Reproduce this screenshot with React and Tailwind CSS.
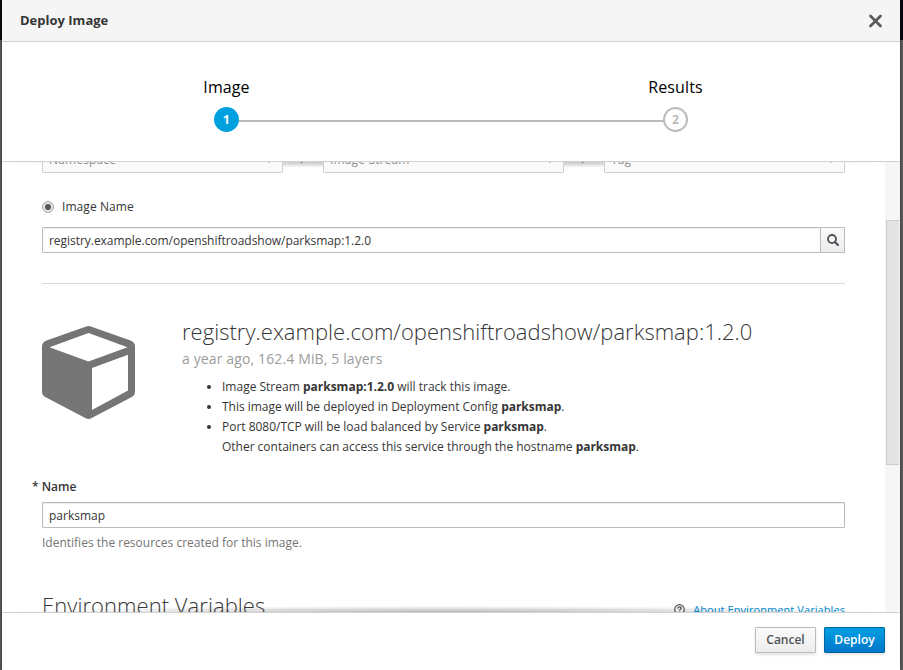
import React from "react";

function Caret() {
  return (
    <svg width="8" height="8" viewBox="0 0 8 8" className="mt-[2px]" fill="none" stroke="#8b8b8b" strokeWidth="1.3">
      <path d="M1 2 L4 5 L7 2" />
    </svg>
  );
}

function Select({ label }) {
  return (
    <div className="flex h-[26px] w-[241px] shrink-0 items-center justify-between rounded-[1px] border border-[#d1d1d1] bg-[#fafafa] pr-[9px] pl-1.5 text-[12px] leading-[20px] tracking-[0.15px] text-[#8b8d8f]">
      <span>{label}</span>
      <Caret />
    </div>
  );
}

function Slash() {
  return <div className="flex w-10 justify-center pt-[2px] text-[12px] leading-[20px] text-[#363636]">/</div>;
}

function Cube() {
  return (
    <svg width="93" height="93" viewBox="0 0 93 93" className="block shrink-0" fill="#757575" fillRule="evenodd">
      <path d="M44.2 0.4 Q46.5 -0.4 48.8 0.4 L88.5 14.4 Q93 16.2 93 20.5 V65.5 Q93 69 89.8 71 L49.2 92.3 Q46.5 93.6 43.8 92.3 L3.2 71 Q0 69 0 65.5 V20.5 Q0 16.2 4.5 14.4 Z M46.5 7 L7.5 21.3 L46.5 35.6 L85.5 21.3 Z M50 41.9 V84 L86 64.5 V28.7 Z" />
    </svg>
  );
}

function Step({ title, number, active }) {
  return (
    <div className="z-10 flex w-[61px] flex-col items-center">
      <div className="h-[24px] text-[16px] leading-[24px] tracking-[0.1px] text-black">{title}</div>
      <div
        className={
          active
            ? "mt-2 flex h-[25px] w-[25px] items-center justify-center rounded-full border-2 border-[#00a0df] bg-[#00a0df] text-[12px] font-bold text-white"
            : "mt-2 flex h-[25px] w-[25px] items-center justify-center rounded-full border-2 border-[#bbb] bg-white text-[12px] font-bold text-[#bbb]"
        }
      >
        {number}
      </div>
    </div>
  );
}

export default function App() {
  return (
    <div className="flex h-[670px] w-[903px] overflow-hidden bg-[linear-gradient(#08080e_0px,#08080e_40px,#5e5e60_40px)] pr-[3px] pl-[2px] font-['Open_Sans',sans-serif] text-[12px] leading-[20px] text-[#363636]">
      <div className="flex h-full w-[898px] flex-col bg-white shadow-[0_0_3px_rgba(0,0,0,0.6)]">
        <header className="flex h-[42px] shrink-0 items-center justify-between border-b border-[#d1d1d1] bg-[#f5f5f5] pr-[18px] pl-[18px]">
          <h1 className="-mt-[2px] text-[13px] leading-[20px] font-bold">Deploy Image</h1>
          <svg width="14" height="14" viewBox="0 0 14 14" stroke="#5a5a5a" strokeWidth="2.7" strokeLinecap="round" className="mt-px">
            <path d="M2.5 2 L12.5 12 M12.5 2 L2.5 12" />
          </svg>
        </header>

        <section className="flex h-[120px] shrink-0 border-b border-[#d1d1d1] pt-[33px] pl-[194px]">
          <div className="flex w-[510px] items-start">
            <Step title="Image" number="1" active />
            <div className="-mx-[19px] mt-[45px] h-[2px] flex-1 bg-[#bbb]" />
            <Step title="Results" number="2" />
          </div>
        </section>

        <main className="relative flex h-[450px] shrink-0 overflow-hidden">
          <div className="pointer-events-none absolute top-0 left-0 h-[6px] w-[883px] bg-[radial-gradient(farthest-side_at_50%_0,rgba(0,0,0,0.28),rgba(0,0,0,0))]" />
          <div className="pointer-events-none absolute bottom-0 left-0 h-[6px] w-[883px] bg-[radial-gradient(farthest-side_at_50%_100%,rgba(0,0,0,0.28),rgba(0,0,0,0))]" />
          <div className="relative -mt-[15px] w-[883px] pr-10 pl-10">
            <div className="flex">
              <Select label="Namespace" />
              <Slash />
              <Select label="Image Stream" />
              <Slash />
              <Select label="Tag" />
            </div>

            <div className="mt-[24px] flex h-5 items-center">
              <span className="flex h-3 w-3 items-center justify-center rounded-full border border-[#aaa] bg-[#e4e4e4]">
                <span className="h-1.5 w-1.5 rounded-full bg-[#555]" />
              </span>
              <span className="ml-2 tracking-[0.08px]">Image Name</span>
            </div>

            <div className="mt-[10px] flex h-[26px]">
              <div className="flex flex-1 items-center rounded-l-[1px] border border-[#bbb] pt-px pl-1.5 tracking-[-0.04px] shadow-[inset_0_1px_1px_rgba(3,3,3,0.075)]">
                registry.example.com/openshiftroadshow/parksmap:1.2.0
              </div>
              <div className="flex w-[24px] items-center justify-center rounded-r-[1px] border border-l-0 border-[#bbb] bg-linear-to-b from-[#fafafa] to-[#ededed]">
                <svg width="12" height="12" viewBox="0 0 12 12" fill="none" stroke="#4d5258">
                  <circle cx="5" cy="5" r="4" strokeWidth="1.8" />
                  <path d="M8 8 L11 11" strokeWidth="2.2" strokeLinecap="round" />
                </svg>
              </div>
            </div>

            <div className="mt-[30px] h-px bg-[#d8d8d8]" />

            <div className="mt-[32px] flex h-[141px]">
              <div className="w-[140px] shrink-0 pt-[10px]">
                <Cube />
              </div>
              <div className="whitespace-nowrap">
                <h2 className="mt-[2px] text-[22px] leading-[26px] font-light tracking-[0.025px]">registry.example.com/openshiftroadshow/parksmap:1.2.0</h2>
                <p className="mt-[5px] text-[14px] leading-[20px] tracking-[0.13px] text-[#9c9c9c]">a year ago, 162.4 MiB, 5 layers</p>
                <ul className="mt-[8px] list-disc pl-10">
                  <li>Image Stream <b>parksmap:1.2.0</b> will track this image.</li>
                  <li className="tracking-[-0.03px]">This image will be deployed in Deployment Config <b>parksmap</b>.</li>
                  <li className="tracking-[-0.02px]">
                    Port 8080/TCP will be load balanced by Service <b>parksmap</b>.<br />
                    Other containers can access this service through the hostname <b>parksmap</b>.
                  </li>
                </ul>
              </div>
            </div>

            <div className="mt-[20px] -ml-[10px] h-5 font-semibold">* Name</div>
            <div className="mt-[5px] flex h-[26px] items-center rounded-[1px] border border-[#bbb] pt-px pl-1.5 shadow-[inset_0_1px_1px_rgba(3,3,3,0.075)]">
              parksmap
            </div>
            <p className="mt-[5px] text-[#757575]">Identifies the resources created for this image.</p>

            <div className="mt-[39px] flex h-[28px] items-start justify-between">
              <h2 className="text-[22px] leading-[26px] font-light tracking-[0.05px]">Environment Variables</h2>
              <div className="mt-[9px] flex items-center text-[11px] leading-[18px] text-[#0088ce]">
                <svg width="11" height="11" viewBox="0 0 11 11" fill="none" stroke="#4d5258" className="-mt-px mr-2">
                  <circle cx="5.5" cy="5.5" r="4.8" strokeWidth="1.2" />
                  <path d="M3.8 4.4 C3.8 2.4 7.2 2.4 7.2 4.2 C7.2 5.3 5.5 5.3 5.5 6.6 M5.5 7.4 V8.7" strokeWidth="1.4" />
                </svg>
                <span className="tracking-[0.08px]">About Environment Variables</span>
              </div>
            </div>
          </div>
          <div className="h-full w-[15px] bg-[#f6f6f6] pt-[58px] pr-px pl-px">
            <div className="h-[245px] border border-r-0 border-[#ccc] bg-[#e4e4e4]" />
          </div>
        </main>

        <footer className="flex flex-1 justify-end gap-2 border-t border-[#d1d1d1] pt-[14px] pr-[15px]">
          <button className="h-[26px] w-[61px] rounded-[1px] border border-[#bbb] bg-linear-to-b from-[#fafafa] to-[#ededed] text-[12px] leading-[24px] font-semibold text-[#4d5258] shadow-[0_2px_3px_rgba(3,3,3,0.1)]">
            Cancel
          </button>
          <button className="h-[26px] w-[61px] rounded-[1px] border border-[#00659c] bg-linear-to-b from-[#00a0e2] to-[#0077cc] text-[12px] leading-[24px] font-semibold text-white shadow-[0_2px_3px_rgba(3,3,3,0.1)]">
            Deploy
          </button>
        </footer>
      </div>
    </div>
  );
}
